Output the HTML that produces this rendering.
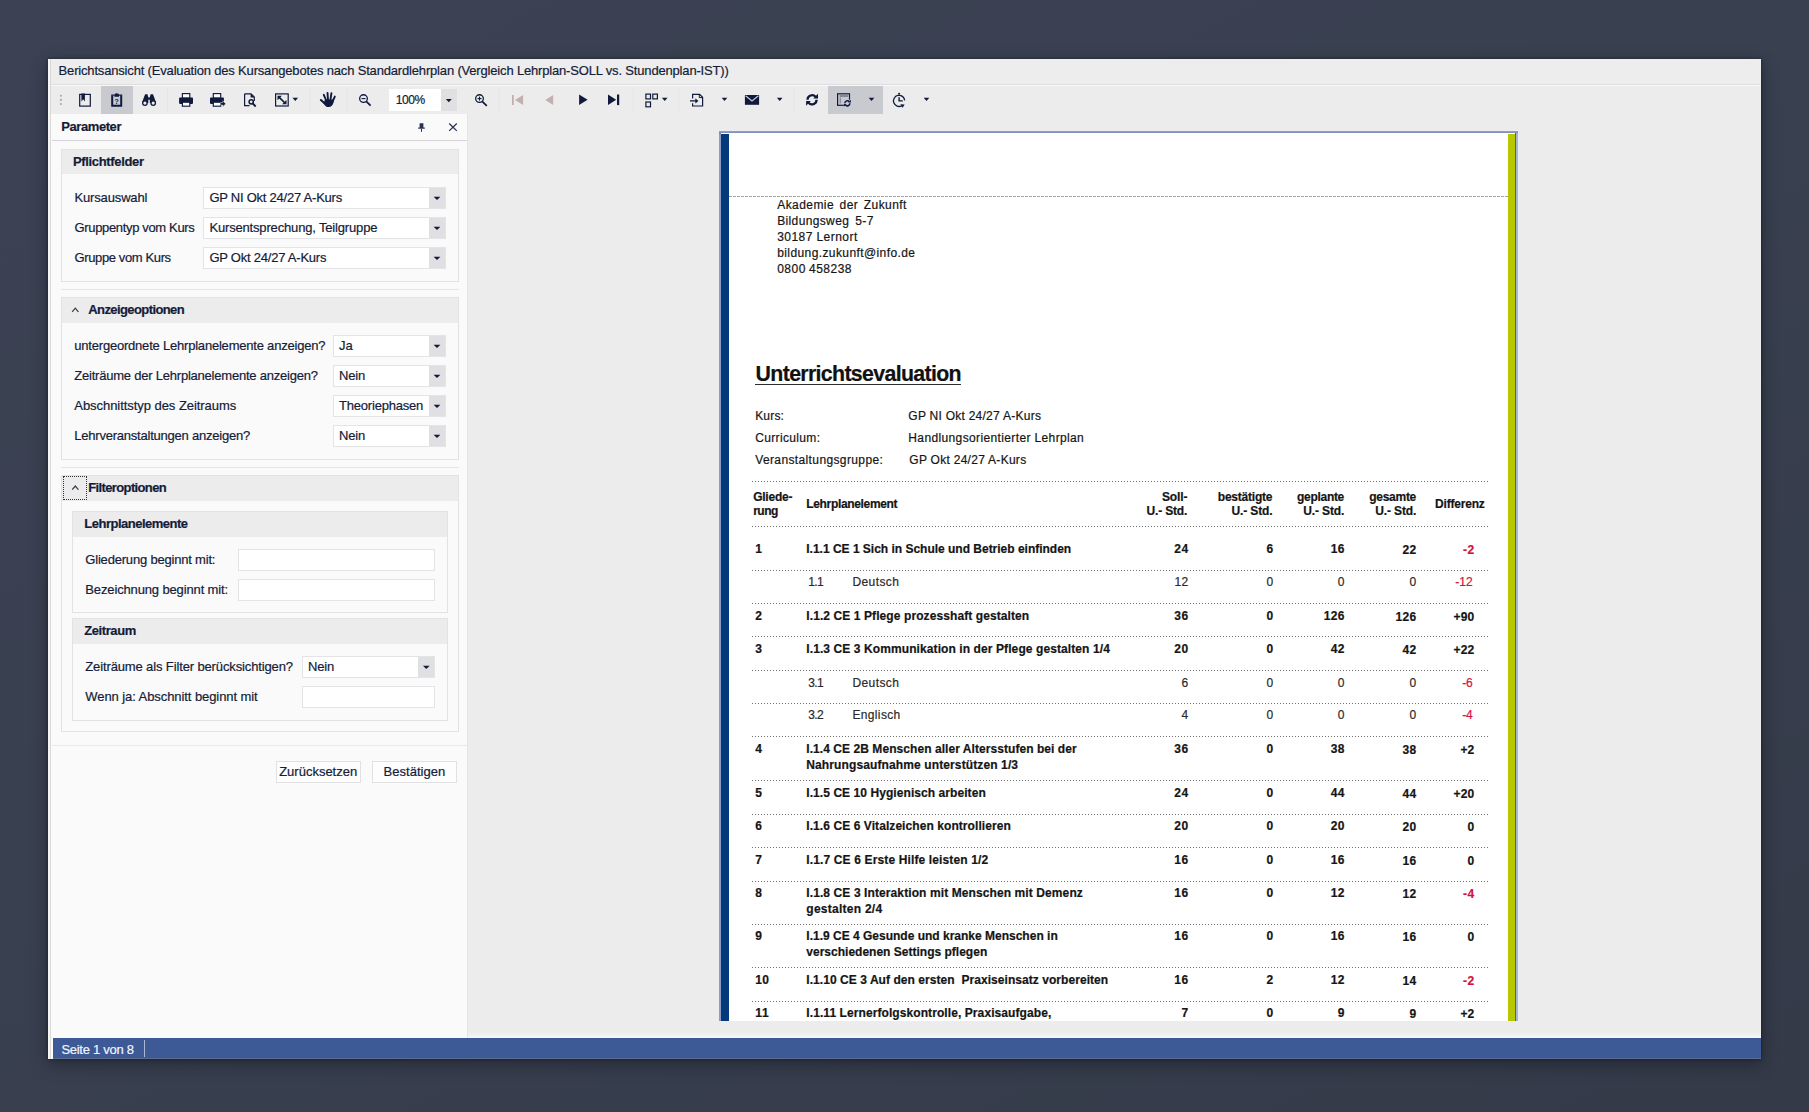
<!DOCTYPE html>
<html lang="de">
<head>
<meta charset="utf-8">
<title>Berichtsansicht</title>
<style>
html,body{margin:0;padding:0}
body{width:1809px;height:1112px;overflow:hidden;position:relative;
 background:linear-gradient(155deg,#3c4253 0%,#394050 45%,#343a48 100%);
 font-family:"Liberation Sans",sans-serif;color:#141c38}
.a{position:absolute;box-sizing:border-box}
.t{position:absolute;white-space:pre;line-height:20px;height:20px;-webkit-text-stroke:0.2px}
.win{left:48px;top:59px;width:1713px;height:1000px;background:#ececec;box-shadow:0 5px 16px 0 rgba(12,14,24,.42),0 0 3px 0 rgba(12,14,24,.55)}
.grp{border:1px solid #e2e2e4;background:#fafafa}
.gh{background:#ececec}
.cb{background:#fff;border:1px solid #e4e4e6}
.cbb{background:#e0e0e2}
.arr{width:0;height:0;border-left:3.5px solid transparent;border-right:3.5px solid transparent;border-top:4px solid #1a2340}
.arrs{width:0;height:0;border-left:3px solid transparent;border-right:3px solid transparent;border-top:3px solid #1a2340}
.sep{width:1px;background:#e3e3e3}
.dot{height:1px;left:752px;width:736px;background:repeating-linear-gradient(to right,#707070 0 1px,transparent 1px 3px)}
.btn{background:#fdfdfd;border:1px solid #e1e1e3}
svg{position:absolute;overflow:visible}
</style>
</head>
<body>
<div class="a win"></div>
<div class="a" style="left:48px;top:59px;width:2.3px;height:1000px;background:#f5f5f5"></div>
<div class="a" style="left:50.3px;top:59px;width:1px;height:1000px;background:#d9d9d7"></div>
<!-- title bar -->
<div class="a" style="left:51.3px;top:59px;width:1709.7px;height:25px;background:#ededed"></div>
<div class="a" style="left:51.3px;top:84px;width:1709.7px;height:1px;background:#dfdfdf"></div>
<div class="a" style="left:51.3px;top:85px;width:1709.7px;height:1px;background:#f8f8f8"></div>
<!-- toolbar -->
<div class="a" style="left:51.3px;top:86px;width:1709.7px;height:28px;background:#ececec"></div>
<div class="a" style="left:101px;top:86px;width:32px;height:28px;background:#c9cad0"></div>
<div class="a" style="left:828px;top:86px;width:55px;height:28px;background:#c9cad0"></div>

<!-- left panel -->
<div class="a" style="left:51.3px;top:114px;width:415.7px;height:945px;background:#fafafa"></div>
<div class="a" style="left:467px;top:114px;width:1px;height:924px;background:#e5e5e5"></div>
<div class="a" style="left:52px;top:140px;width:415px;height:1px;background:#d4d4d8"></div>
<div class="a grp" style="left:61px;top:149px;width:398.00px;height:133.00px;"></div>
<div class="a gh" style="left:62px;top:150px;width:396.00px;height:24.00px;"></div>
<div class="a " style="left:61px;top:289px;width:398.00px;height:1.00px;background:#e6e6e8"></div>
<div class="a grp" style="left:61px;top:297px;width:398.00px;height:163.00px;"></div>
<div class="a gh" style="left:62px;top:298px;width:396.00px;height:25.00px;"></div>
<div class="a " style="left:61px;top:467px;width:398.00px;height:1.00px;background:#e6e6e8"></div>
<div class="a grp" style="left:61px;top:475px;width:398.00px;height:257.00px;"></div>
<div class="a gh" style="left:62px;top:476px;width:396.00px;height:25.00px;"></div>
<div class="a grp" style="left:72px;top:511px;width:376.00px;height:102.00px;"></div>
<div class="a gh" style="left:73px;top:512px;width:374.00px;height:25.00px;"></div>
<div class="a grp" style="left:72px;top:618px;width:376.00px;height:103.00px;"></div>
<div class="a gh" style="left:73px;top:619px;width:374.00px;height:25.00px;"></div>
<div class="a " style="left:52px;top:745px;width:415.00px;height:1.00px;background:#e9e9eb"></div>
<div class="a " style="left:63px;top:476px;width:24.00px;height:24.00px;border:1px dotted #333"></div>
<div class="a cb" style="left:203px;top:187px;width:243.00px;height:22.00px;"></div><div class="a cbb" style="left:429px;top:188px;width:16.00px;height:20.00px;"></div>
<div class="a cb" style="left:203px;top:217px;width:243.00px;height:22.00px;"></div><div class="a cbb" style="left:429px;top:218px;width:16.00px;height:20.00px;"></div>
<div class="a cb" style="left:203px;top:247px;width:243.00px;height:22.00px;"></div><div class="a cbb" style="left:429px;top:248px;width:16.00px;height:20.00px;"></div>
<div class="a cb" style="left:333px;top:335px;width:113.00px;height:22.00px;"></div><div class="a cbb" style="left:429px;top:336px;width:16.00px;height:20.00px;"></div>
<div class="a cb" style="left:333px;top:365px;width:113.00px;height:22.00px;"></div><div class="a cbb" style="left:429px;top:366px;width:16.00px;height:20.00px;"></div>
<div class="a cb" style="left:333px;top:395px;width:113.00px;height:22.00px;"></div><div class="a cbb" style="left:429px;top:396px;width:16.00px;height:20.00px;"></div>
<div class="a cb" style="left:333px;top:425px;width:113.00px;height:22.00px;"></div><div class="a cbb" style="left:429px;top:426px;width:16.00px;height:20.00px;"></div>
<div class="a cb" style="left:238px;top:549px;width:197.00px;height:22.00px;"></div>
<div class="a cb" style="left:238px;top:579px;width:197.00px;height:22.00px;"></div>
<div class="a cb" style="left:302px;top:656px;width:133.00px;height:22.00px;"></div><div class="a cbb" style="left:418px;top:657px;width:16.00px;height:20.00px;"></div>
<div class="a cb" style="left:302px;top:686px;width:133.00px;height:22.00px;"></div>
<div class="a btn" style="left:276px;top:761px;width:85.00px;height:22.00px;"></div>
<div class="a btn" style="left:372px;top:761px;width:85.00px;height:22.00px;"></div>
<div class="a " style="left:389px;top:89px;width:52.00px;height:22.00px;background:#fff"></div>
<div class="a " style="left:441px;top:89px;width:16.00px;height:22.00px;background:#e0e0e2"></div>
<div class="a" style="left:468px;top:1032px;width:1293px;height:6px;background:linear-gradient(to bottom,#ececec,#f7f7f7)"></div>
<!-- status bar -->
<div class="a" style="left:53px;top:1038px;width:1708px;height:21px;background:#3d5996"></div>
<div class="a" style="left:53px;top:1058px;width:1708px;height:1px;background:#596d92"></div>
<div class="a" style="left:144px;top:1040px;width:1px;height:17px;background:#aab6d4"></div>
<!-- report page -->
<div class="a" style="left:719px;top:130.5px;width:798.8px;height:890.5px;background:linear-gradient(to bottom,#96a2d0 0,#7683b4 2.5px,#8e9ac6 3px)"></div>
<div class="a" style="left:1515.2px;top:133px;width:1px;height:888px;background:#55598f"></div>
<div class="a" style="left:1516.2px;top:133px;width:1.6px;height:888px;background:#a5b6d2"></div>
<div class="a" style="left:721px;top:133px;width:794.2px;height:888px;background:#fff"></div>
<div class="a" style="left:721px;top:134px;width:8px;height:887px;background:#043a7a"></div>
<div class="a" style="left:1507.8px;top:134px;width:7.4px;height:887px;background:#b8c800"></div>
<div class="a" style="left:729px;top:196px;width:779px;height:1px;background:repeating-linear-gradient(to right,#a2a2a2 0 3px,transparent 3px 4px)"></div>
<div class="a" style="left:755px;top:383.7px;width:206px;height:1.5px;background:#2e2e2e"></div>
<div class="a dot" style="top:481px"></div>
<div class="a dot" style="top:526px"></div>
<div class="a dot" style="top:570px"></div>
<div class="a dot" style="top:603px"></div>
<div class="a dot" style="top:636px"></div>
<div class="a dot" style="top:670px"></div>
<div class="a dot" style="top:703px"></div>
<div class="a dot" style="top:736px"></div>
<div class="a dot" style="top:780px"></div>
<div class="a dot" style="top:814px"></div>
<div class="a dot" style="top:847px"></div>
<div class="a dot" style="top:881px"></div>
<div class="a dot" style="top:924px"></div>
<div class="a dot" style="top:967px"></div>
<div class="a dot" style="top:1001px"></div>
<span class="t" style="left:58.60px;top:61px;font-size:13px;letter-spacing:-0.172px;">Berichtsansicht (Evaluation des Kursangebotes nach Standardlehrplan (Vergleich Lehrplan-SOLL vs. Stundenplan-IST))</span>
<span class="t" style="left:395.80px;top:90px;font-size:12px;letter-spacing:-0.418px;">100%</span>
<span class="t" style="left:61.20px;top:117px;font-size:13px;font-weight:700;letter-spacing:-0.412px;">Parameter</span>
<span class="t" style="left:73.00px;top:152px;font-size:13px;font-weight:700;letter-spacing:-0.339px;">Pflichtfelder</span>
<span class="t" style="left:74.50px;top:188px;font-size:13px;letter-spacing:-0.152px;">Kursauswahl</span>
<span class="t" style="left:74.50px;top:218px;font-size:13px;letter-spacing:-0.340px;">Gruppentyp vom Kurs</span>
<span class="t" style="left:74.50px;top:248px;font-size:13px;letter-spacing:-0.378px;">Gruppe vom Kurs</span>
<span class="t" style="left:209.40px;top:188px;font-size:13px;letter-spacing:-0.238px;">GP NI Okt 24/27 A-Kurs</span>
<span class="t" style="left:209.40px;top:218px;font-size:13px;letter-spacing:-0.165px;">Kursentsprechung, Teilgruppe</span>
<span class="t" style="left:209.40px;top:248px;font-size:13px;letter-spacing:-0.226px;">GP Okt 24/27 A-Kurs</span>
<span class="t" style="left:88.30px;top:300px;font-size:13px;font-weight:700;letter-spacing:-0.595px;">Anzeigeoptionen</span>
<span class="t" style="left:74.30px;top:336px;font-size:13px;letter-spacing:-0.208px;">untergeordnete Lehrplanelemente anzeigen?</span>
<span class="t" style="left:74.30px;top:366px;font-size:13px;letter-spacing:-0.220px;">Zeiträume der Lehrplanelemente anzeigen?</span>
<span class="t" style="left:74.30px;top:396px;font-size:13px;letter-spacing:-0.051px;">Abschnittstyp des Zeitraums</span>
<span class="t" style="left:74.30px;top:426px;font-size:13px;letter-spacing:-0.222px;">Lehrveranstaltungen anzeigen?</span>
<span class="t" style="left:339.00px;top:336px;font-size:13px;letter-spacing:0.101px;">Ja</span>
<span class="t" style="left:339.00px;top:366px;font-size:13px;letter-spacing:-0.204px;">Nein</span>
<span class="t" style="left:339.00px;top:396px;font-size:13px;letter-spacing:-0.202px;">Theoriephasen</span>
<span class="t" style="left:339.00px;top:426px;font-size:13px;letter-spacing:-0.204px;">Nein</span>
<span class="t" style="left:88.30px;top:478px;font-size:13px;font-weight:700;letter-spacing:-0.634px;">Filteroptionen</span>
<span class="t" style="left:84.30px;top:514px;font-size:13px;font-weight:700;letter-spacing:-0.502px;">Lehrplanelemente</span>
<span class="t" style="left:85.30px;top:550px;font-size:13px;letter-spacing:-0.192px;">Gliederung beginnt mit:</span>
<span class="t" style="left:85.30px;top:580px;font-size:13px;letter-spacing:-0.138px;">Bezeichnung beginnt mit:</span>
<span class="t" style="left:84.30px;top:621px;font-size:13px;font-weight:700;letter-spacing:-0.424px;">Zeitraum</span>
<span class="t" style="left:85.30px;top:657px;font-size:13px;letter-spacing:-0.131px;">Zeiträume als Filter berücksichtigen?</span>
<span class="t" style="left:85.30px;top:687px;font-size:13px;letter-spacing:-0.077px;">Wenn ja: Abschnitt beginnt mit</span>
<span class="t" style="left:308.00px;top:657px;font-size:13px;letter-spacing:-0.204px;">Nein</span>
<span class="t" style="left:279.16px;top:762px;font-size:13px;">Zurücksetzen</span>
<span class="t" style="left:383.49px;top:762px;font-size:13px;letter-spacing:0.039px;">Bestätigen</span>
<span class="t" style="left:61.40px;top:1040px;font-size:13px;color:#f2f4fa;letter-spacing:-0.269px;">Seite 1 von 8</span>
<span class="t" style="left:777.20px;top:195px;font-size:12px;color:#151515;letter-spacing:0.438px;word-spacing:1.770px;">Akademie der Zukunft</span>
<span class="t" style="left:777.20px;top:211px;font-size:12px;color:#151515;letter-spacing:0.363px;word-spacing:2.324px;">Bildungsweg 5-7</span>
<span class="t" style="left:777.20px;top:227px;font-size:12px;color:#151515;letter-spacing:0.456px;word-spacing:-0.162px;">30187 Lernort</span>
<span class="t" style="left:777.20px;top:243px;font-size:12px;color:#151515;letter-spacing:0.402px;">bildung.zukunft@info.de</span>
<span class="t" style="left:777.20px;top:259px;font-size:12px;color:#151515;letter-spacing:0.489px;word-spacing:-0.652px;">0800 458238</span>
<span class="t" style="left:755.60px;top:364px;font-size:21.33px;font-weight:700;color:#111;letter-spacing:-0.665px;">Unterrichtsevaluation</span>
<span class="t" style="left:755.20px;top:406px;font-size:12px;color:#151515;letter-spacing:0.172px;">Kurs:</span>
<span class="t" style="left:908.30px;top:406px;font-size:12px;color:#151515;letter-spacing:0.258px;">GP NI Okt 24/27 A-Kurs</span>
<span class="t" style="left:755.20px;top:428px;font-size:12px;color:#151515;letter-spacing:0.346px;">Curriculum:</span>
<span class="t" style="left:908.30px;top:428px;font-size:12px;color:#151515;letter-spacing:0.370px;">Handlungsorientierter Lehrplan</span>
<span class="t" style="left:755.20px;top:450px;font-size:12px;color:#151515;letter-spacing:0.378px;">Veranstaltungsgruppe:</span>
<span class="t" style="left:909.30px;top:450px;font-size:12px;color:#151515;letter-spacing:0.278px;">GP Okt 24/27 A-Kurs</span>
<span class="t" style="left:753.20px;top:487px;font-size:12px;font-weight:700;color:#151515;letter-spacing:-0.243px;">Gliede-</span>
<span class="t" style="left:753.20px;top:501px;font-size:12px;font-weight:700;color:#151515;letter-spacing:-0.492px;">rung</span>
<span class="t" style="left:806.30px;top:494px;font-size:12px;font-weight:700;color:#151515;letter-spacing:-0.338px;">Lehrplanelement</span>
<span class="t" style="left:1162.00px;top:487px;font-size:12px;font-weight:700;color:#151515;letter-spacing:-0.150px;">Soll-</span>
<span class="t" style="left:1146.45px;top:501px;font-size:12px;font-weight:700;color:#151515;letter-spacing:-0.150px;">U.- Std.</span>
<span class="t" style="left:1217.77px;top:487px;font-size:12px;font-weight:700;color:#151515;letter-spacing:-0.217px;">bestätigte</span>
<span class="t" style="left:1231.55px;top:501px;font-size:12px;font-weight:700;color:#151515;letter-spacing:-0.150px;">U.- Std.</span>
<span class="t" style="left:1297.05px;top:487px;font-size:12px;font-weight:700;color:#151515;letter-spacing:-0.299px;">geplante</span>
<span class="t" style="left:1303.35px;top:501px;font-size:12px;font-weight:700;color:#151515;letter-spacing:-0.150px;">U.- Std.</span>
<span class="t" style="left:1369.18px;top:487px;font-size:12px;font-weight:700;color:#151515;letter-spacing:-0.263px;">gesamte</span>
<span class="t" style="left:1375.35px;top:501px;font-size:12px;font-weight:700;color:#151515;letter-spacing:-0.150px;">U.- Std.</span>
<span class="t" style="left:1435.10px;top:494px;font-size:12px;font-weight:700;color:#151515;letter-spacing:-0.205px;">Differenz</span>
<span class="t" style="left:755.20px;top:539px;font-size:12px;font-weight:700;color:#151515;letter-spacing:0.410px;">1</span>
<span class="t" style="left:806.30px;top:539px;font-size:12px;font-weight:700;color:#151515;letter-spacing:-0.012px;">I.1.1 CE 1 Sich in Schule und Betrieb einfinden</span>
<span class="t" style="left:1174.32px;top:539px;font-size:12px;font-weight:700;color:#151515;letter-spacing:0.418px;">24</span>
<span class="t" style="left:1266.61px;top:539px;font-size:12px;font-weight:700;color:#151515;letter-spacing:0.410px;">6</span>
<span class="t" style="left:1330.72px;top:539px;font-size:12px;font-weight:700;color:#151515;letter-spacing:0.418px;">16</span>
<span class="t" style="left:1402.52px;top:540px;font-size:12px;font-weight:700;color:#151515;letter-spacing:0.418px;">22</span>
<span class="t" style="left:1462.88px;top:540px;font-size:12px;font-weight:700;color:#d4103c;letter-spacing:0.651px;">-2</span>
<span class="t" style="left:808.20px;top:572px;font-size:12px;color:#2a2a2a;letter-spacing:-0.566px;">1.1</span>
<span class="t" style="left:852.40px;top:572px;font-size:12px;color:#2a2a2a;letter-spacing:0.416px;">Deutsch</span>
<span class="t" style="left:1174.47px;top:572px;font-size:12px;color:#2a2a2a;letter-spacing:0.273px;">12</span>
<span class="t" style="left:1266.61px;top:572px;font-size:12px;color:#2a2a2a;letter-spacing:0.265px;">0</span>
<span class="t" style="left:1337.81px;top:572px;font-size:12px;color:#2a2a2a;letter-spacing:0.265px;">0</span>
<span class="t" style="left:1409.61px;top:572px;font-size:12px;color:#2a2a2a;letter-spacing:0.265px;">0</span>
<span class="t" style="left:1455.37px;top:572px;font-size:12px;color:#d4103c;letter-spacing:-0.009px;">-12</span>
<span class="t" style="left:755.20px;top:606px;font-size:12px;font-weight:700;color:#151515;letter-spacing:0.410px;">2</span>
<span class="t" style="left:806.30px;top:606px;font-size:12px;font-weight:700;color:#151515;letter-spacing:0.091px;">I.1.2 CE 1 Pflege prozesshaft gestalten</span>
<span class="t" style="left:1174.32px;top:606px;font-size:12px;font-weight:700;color:#151515;letter-spacing:0.418px;">36</span>
<span class="t" style="left:1266.61px;top:606px;font-size:12px;font-weight:700;color:#151515;letter-spacing:0.410px;">0</span>
<span class="t" style="left:1323.64px;top:606px;font-size:12px;font-weight:700;color:#151515;letter-spacing:0.415px;">126</span>
<span class="t" style="left:1395.44px;top:607px;font-size:12px;font-weight:700;color:#151515;letter-spacing:0.415px;">126</span>
<span class="t" style="left:1453.47px;top:607px;font-size:12px;font-weight:700;color:#151515;letter-spacing:0.188px;">+90</span>
<span class="t" style="left:755.20px;top:639px;font-size:12px;font-weight:700;color:#151515;letter-spacing:0.410px;">3</span>
<span class="t" style="left:806.30px;top:639px;font-size:12px;font-weight:700;color:#151515;letter-spacing:0.094px;">I.1.3 CE 3 Kommunikation in der Pflege gestalten 1/4</span>
<span class="t" style="left:1174.32px;top:639px;font-size:12px;font-weight:700;color:#151515;letter-spacing:0.418px;">20</span>
<span class="t" style="left:1266.61px;top:639px;font-size:12px;font-weight:700;color:#151515;letter-spacing:0.410px;">0</span>
<span class="t" style="left:1330.72px;top:639px;font-size:12px;font-weight:700;color:#151515;letter-spacing:0.418px;">42</span>
<span class="t" style="left:1402.52px;top:640px;font-size:12px;font-weight:700;color:#151515;letter-spacing:0.418px;">42</span>
<span class="t" style="left:1453.47px;top:640px;font-size:12px;font-weight:700;color:#151515;letter-spacing:0.188px;">+22</span>
<span class="t" style="left:808.20px;top:673px;font-size:12px;color:#2a2a2a;letter-spacing:-0.566px;">3.1</span>
<span class="t" style="left:852.40px;top:673px;font-size:12px;color:#2a2a2a;letter-spacing:0.416px;">Deutsch</span>
<span class="t" style="left:1181.41px;top:673px;font-size:12px;color:#2a2a2a;letter-spacing:0.265px;">6</span>
<span class="t" style="left:1266.61px;top:673px;font-size:12px;color:#2a2a2a;letter-spacing:0.265px;">0</span>
<span class="t" style="left:1337.81px;top:673px;font-size:12px;color:#2a2a2a;letter-spacing:0.265px;">0</span>
<span class="t" style="left:1409.61px;top:673px;font-size:12px;color:#2a2a2a;letter-spacing:0.265px;">0</span>
<span class="t" style="left:1462.18px;top:673px;font-size:12px;color:#d4103c;letter-spacing:-0.154px;">-6</span>
<span class="t" style="left:808.20px;top:705px;font-size:12px;color:#2a2a2a;letter-spacing:-0.566px;">3.2</span>
<span class="t" style="left:852.40px;top:705px;font-size:12px;color:#2a2a2a;letter-spacing:0.363px;">Englisch</span>
<span class="t" style="left:1181.41px;top:705px;font-size:12px;color:#2a2a2a;letter-spacing:0.265px;">4</span>
<span class="t" style="left:1266.61px;top:705px;font-size:12px;color:#2a2a2a;letter-spacing:0.265px;">0</span>
<span class="t" style="left:1337.81px;top:705px;font-size:12px;color:#2a2a2a;letter-spacing:0.265px;">0</span>
<span class="t" style="left:1409.61px;top:705px;font-size:12px;color:#2a2a2a;letter-spacing:0.265px;">0</span>
<span class="t" style="left:1462.18px;top:705px;font-size:12px;color:#d4103c;letter-spacing:-0.154px;">-4</span>
<span class="t" style="left:755.20px;top:739px;font-size:12px;font-weight:700;color:#151515;letter-spacing:0.410px;">4</span>
<span class="t" style="left:806.30px;top:739px;font-size:12px;font-weight:700;color:#151515;letter-spacing:0.059px;">I.1.4 CE 2B Menschen aller Altersstufen bei der</span>
<span class="t" style="left:806.30px;top:755px;font-size:12px;font-weight:700;color:#151515;letter-spacing:0.115px;">Nahrungsaufnahme unterstützen 1/3</span>
<span class="t" style="left:1174.32px;top:739px;font-size:12px;font-weight:700;color:#151515;letter-spacing:0.418px;">36</span>
<span class="t" style="left:1266.61px;top:739px;font-size:12px;font-weight:700;color:#151515;letter-spacing:0.410px;">0</span>
<span class="t" style="left:1330.72px;top:739px;font-size:12px;font-weight:700;color:#151515;letter-spacing:0.418px;">38</span>
<span class="t" style="left:1402.52px;top:740px;font-size:12px;font-weight:700;color:#151515;letter-spacing:0.418px;">38</span>
<span class="t" style="left:1460.44px;top:740px;font-size:12px;font-weight:700;color:#151515;letter-spacing:0.077px;">+2</span>
<span class="t" style="left:755.20px;top:783px;font-size:12px;font-weight:700;color:#151515;letter-spacing:0.410px;">5</span>
<span class="t" style="left:806.30px;top:783px;font-size:12px;font-weight:700;color:#151515;letter-spacing:0.068px;">I.1.5 CE 10 Hygienisch arbeiten</span>
<span class="t" style="left:1174.32px;top:783px;font-size:12px;font-weight:700;color:#151515;letter-spacing:0.418px;">24</span>
<span class="t" style="left:1266.61px;top:783px;font-size:12px;font-weight:700;color:#151515;letter-spacing:0.410px;">0</span>
<span class="t" style="left:1330.72px;top:783px;font-size:12px;font-weight:700;color:#151515;letter-spacing:0.418px;">44</span>
<span class="t" style="left:1402.52px;top:784px;font-size:12px;font-weight:700;color:#151515;letter-spacing:0.418px;">44</span>
<span class="t" style="left:1453.47px;top:784px;font-size:12px;font-weight:700;color:#151515;letter-spacing:0.188px;">+20</span>
<span class="t" style="left:755.20px;top:816px;font-size:12px;font-weight:700;color:#151515;letter-spacing:0.410px;">6</span>
<span class="t" style="left:806.30px;top:816px;font-size:12px;font-weight:700;color:#151515;letter-spacing:0.074px;">I.1.6 CE 6 Vitalzeichen kontrollieren</span>
<span class="t" style="left:1174.32px;top:816px;font-size:12px;font-weight:700;color:#151515;letter-spacing:0.418px;">20</span>
<span class="t" style="left:1266.61px;top:816px;font-size:12px;font-weight:700;color:#151515;letter-spacing:0.410px;">0</span>
<span class="t" style="left:1330.72px;top:816px;font-size:12px;font-weight:700;color:#151515;letter-spacing:0.418px;">20</span>
<span class="t" style="left:1402.52px;top:817px;font-size:12px;font-weight:700;color:#151515;letter-spacing:0.418px;">20</span>
<span class="t" style="left:1467.51px;top:817px;font-size:12px;font-weight:700;color:#151515;letter-spacing:0.410px;">0</span>
<span class="t" style="left:755.20px;top:850px;font-size:12px;font-weight:700;color:#151515;letter-spacing:0.410px;">7</span>
<span class="t" style="left:806.30px;top:850px;font-size:12px;font-weight:700;color:#151515;letter-spacing:0.136px;">I.1.7 CE 6 Erste Hilfe leisten 1/2</span>
<span class="t" style="left:1174.32px;top:850px;font-size:12px;font-weight:700;color:#151515;letter-spacing:0.418px;">16</span>
<span class="t" style="left:1266.61px;top:850px;font-size:12px;font-weight:700;color:#151515;letter-spacing:0.410px;">0</span>
<span class="t" style="left:1330.72px;top:850px;font-size:12px;font-weight:700;color:#151515;letter-spacing:0.418px;">16</span>
<span class="t" style="left:1402.52px;top:851px;font-size:12px;font-weight:700;color:#151515;letter-spacing:0.418px;">16</span>
<span class="t" style="left:1467.51px;top:851px;font-size:12px;font-weight:700;color:#151515;letter-spacing:0.410px;">0</span>
<span class="t" style="left:755.20px;top:883px;font-size:12px;font-weight:700;color:#151515;letter-spacing:0.410px;">8</span>
<span class="t" style="left:806.30px;top:883px;font-size:12px;font-weight:700;color:#151515;letter-spacing:0.099px;">I.1.8 CE 3 Interaktion mit Menschen mit Demenz</span>
<span class="t" style="left:806.30px;top:899px;font-size:12px;font-weight:700;color:#151515;letter-spacing:0.260px;">gestalten 2/4</span>
<span class="t" style="left:1174.32px;top:883px;font-size:12px;font-weight:700;color:#151515;letter-spacing:0.418px;">16</span>
<span class="t" style="left:1266.61px;top:883px;font-size:12px;font-weight:700;color:#151515;letter-spacing:0.410px;">0</span>
<span class="t" style="left:1330.72px;top:883px;font-size:12px;font-weight:700;color:#151515;letter-spacing:0.418px;">12</span>
<span class="t" style="left:1402.52px;top:884px;font-size:12px;font-weight:700;color:#151515;letter-spacing:0.418px;">12</span>
<span class="t" style="left:1462.88px;top:884px;font-size:12px;font-weight:700;color:#d4103c;letter-spacing:0.651px;">-4</span>
<span class="t" style="left:755.20px;top:926px;font-size:12px;font-weight:700;color:#151515;letter-spacing:0.410px;">9</span>
<span class="t" style="left:806.30px;top:926px;font-size:12px;font-weight:700;color:#151515;">I.1.9 CE 4 Gesunde und kranke Menschen in</span>
<span class="t" style="left:806.30px;top:942px;font-size:12px;font-weight:700;color:#151515;letter-spacing:0.007px;">verschiedenen Settings pflegen</span>
<span class="t" style="left:1174.32px;top:926px;font-size:12px;font-weight:700;color:#151515;letter-spacing:0.418px;">16</span>
<span class="t" style="left:1266.61px;top:926px;font-size:12px;font-weight:700;color:#151515;letter-spacing:0.410px;">0</span>
<span class="t" style="left:1330.72px;top:926px;font-size:12px;font-weight:700;color:#151515;letter-spacing:0.418px;">16</span>
<span class="t" style="left:1402.52px;top:927px;font-size:12px;font-weight:700;color:#151515;letter-spacing:0.418px;">16</span>
<span class="t" style="left:1467.51px;top:927px;font-size:12px;font-weight:700;color:#151515;letter-spacing:0.410px;">0</span>
<span class="t" style="left:755.20px;top:970px;font-size:12px;font-weight:700;color:#151515;letter-spacing:0.418px;">10</span>
<span class="t" style="left:806.30px;top:970px;font-size:12px;font-weight:700;color:#151515;letter-spacing:0.055px;">I.1.10 CE 3 Auf den ersten  Praxiseinsatz vorbereiten</span>
<span class="t" style="left:1174.32px;top:970px;font-size:12px;font-weight:700;color:#151515;letter-spacing:0.418px;">16</span>
<span class="t" style="left:1266.61px;top:970px;font-size:12px;font-weight:700;color:#151515;letter-spacing:0.410px;">2</span>
<span class="t" style="left:1330.72px;top:970px;font-size:12px;font-weight:700;color:#151515;letter-spacing:0.418px;">12</span>
<span class="t" style="left:1402.52px;top:971px;font-size:12px;font-weight:700;color:#151515;letter-spacing:0.418px;">14</span>
<span class="t" style="left:1462.88px;top:971px;font-size:12px;font-weight:700;color:#d4103c;letter-spacing:0.651px;">-2</span>
<span class="t" style="left:755.20px;top:1003px;font-size:12px;font-weight:700;color:#151515;letter-spacing:0.754px;">11</span>
<span class="t" style="left:806.30px;top:1003px;font-size:12px;font-weight:700;color:#151515;letter-spacing:0.084px;">I.1.11 Lernerfolgskontrolle, Praxisaufgabe,</span>
<span class="t" style="left:1181.41px;top:1003px;font-size:12px;font-weight:700;color:#151515;letter-spacing:0.410px;">7</span>
<span class="t" style="left:1266.61px;top:1003px;font-size:12px;font-weight:700;color:#151515;letter-spacing:0.410px;">0</span>
<span class="t" style="left:1337.81px;top:1003px;font-size:12px;font-weight:700;color:#151515;letter-spacing:0.410px;">9</span>
<span class="t" style="left:1409.61px;top:1004px;font-size:12px;font-weight:700;color:#151515;letter-spacing:0.410px;">9</span>
<span class="t" style="left:1460.44px;top:1004px;font-size:12px;font-weight:700;color:#151515;letter-spacing:0.077px;">+2</span>
<svg class="a" style="left:0;top:0;z-index:5" width="1809" height="1112" viewBox="0 0 1809 1112">
<polygon points="433.60,196.70 440.40,196.70 437.00,200.00" fill="#0f1a3c" />
<polygon points="433.60,226.70 440.40,226.70 437.00,230.00" fill="#0f1a3c" />
<polygon points="433.60,256.70 440.40,256.70 437.00,260.00" fill="#0f1a3c" />
<polygon points="433.60,344.70 440.40,344.70 437.00,348.00" fill="#0f1a3c" />
<polygon points="433.60,374.70 440.40,374.70 437.00,378.00" fill="#0f1a3c" />
<polygon points="433.60,404.70 440.40,404.70 437.00,408.00" fill="#0f1a3c" />
<polygon points="433.60,434.70 440.40,434.70 437.00,438.00" fill="#0f1a3c" />
<polygon points="422.90,665.70 429.70,665.70 426.30,669.00" fill="#0f1a3c" />
<polygon points="445.80,99.00 451.80,99.00 448.80,102.20" fill="#0f1a3c" />
<polygon points="292.50,97.80 298.10,97.80 295.30,100.90" fill="#0f1a3c" />
<polygon points="661.90,97.80 667.50,97.80 664.70,100.90" fill="#0f1a3c" />
<polygon points="721.70,97.80 727.30,97.80 724.50,100.90" fill="#0f1a3c" />
<polygon points="776.90,97.80 782.50,97.80 779.70,100.90" fill="#0f1a3c" />
<polygon points="868.70,97.80 874.30,97.80 871.50,100.90" fill="#0f1a3c" />
<polygon points="923.70,97.80 929.30,97.80 926.50,100.90" fill="#0f1a3c" />
<rect x="167" y="88" width="1" height="24" fill="#e5e5e5"/>
<rect x="309.5" y="88" width="1" height="24" fill="#e5e5e5"/>
<rect x="346.4" y="88" width="1" height="24" fill="#e5e5e5"/>
<rect x="498.7" y="88" width="1" height="24" fill="#e5e5e5"/>
<rect x="632.5" y="88" width="1" height="24" fill="#e5e5e5"/>
<rect x="678.2" y="88" width="1" height="24" fill="#e5e5e5"/>
<rect x="793.5" y="88" width="1" height="24" fill="#e5e5e5"/>
<circle cx="60.9" cy="95.8" r="1.05" fill="#a9a9ae"/>
<circle cx="60.9" cy="99.9" r="1.05" fill="#a9a9ae"/>
<circle cx="60.9" cy="104" r="1.05" fill="#a9a9ae"/>
<rect x="79.7" y="94.4" width="10.6" height="11.7" fill="none" stroke="#0f1a3c" stroke-width="1.2"/>
<polygon points="81.4,93.4 84.9,93.4 84.9,101.6 83.15,99.3 81.4,101.6" fill="#0f1a3c" />
<path d="M112.2 95.6 V105.7 H121.2 V95.6" fill="none" stroke="#0f1a3c" stroke-width="2"/>
<path d="M111.2 95.2 H114.6 M118.8 95.2 H122.2" stroke="#0f1a3c" stroke-width="1.2"/>
<path d="M114.4 96.8 V95 Q114.4 93.3 116.7 93.3 Q119 93.3 119 95 V96.8 Z" fill="#0f1a3c"/>
<text x="116.7" y="103.6" font-size="7" font-weight="700" text-anchor="middle" fill="#0f1a3c" font-family="Liberation Sans, sans-serif">?</text>
<polygon points="145.2,94.3 147.5,94.3 148.3,97.3 148.3,103 142,103 142.7,100.8 144.4,96" fill="#0f1a3c" />
<polygon points="152.9,94.3 150.6,94.3 149.8,97.3 149.8,103 156.1,103 155.4,100.8 153.7,96" fill="#0f1a3c" />
<rect x="148" y="97.5" width="2.1" height="2.2" fill="#0f1a3c"/>
<circle cx="144.9" cy="103.1" r="2.25" fill="#ececec" stroke="#0f1a3c" stroke-width="1.3"/>
<circle cx="153.2" cy="103.1" r="2.25" fill="#ececec" stroke="#0f1a3c" stroke-width="1.3"/>
<rect x="182.4" y="93.6" width="7.4" height="4.6" fill="#fff" stroke="#0f1a3c" stroke-width="1.15"/>
<rect x="179.1" y="97.5" width="13.9" height="6.4" rx="0.8" fill="#0f1a3c"/>
<rect x="182.4" y="102.2" width="7.4" height="4" fill="#fff" stroke="#0f1a3c" stroke-width="1.15"/>
<rect x="213.3" y="93.6" width="7.4" height="4.6" fill="#fff" stroke="#0f1a3c" stroke-width="1.15"/>
<rect x="210.0" y="97.5" width="13.9" height="6.4" rx="0.8" fill="#0f1a3c"/>
<rect x="213.3" y="102.2" width="7.4" height="4" fill="#fff" stroke="#0f1a3c" stroke-width="1.15"/>
<path d="M220.6 102.5 h2.2 v-1.6 l3 2.9 l-3 2.9 v-1.6 h-2.2 z" fill="#0f1a3c" stroke="#ececec" stroke-width="0.5"/>
<path d="M244.6 93.8 H251 L254.3 97.1 V101 M244.6 93.8 V105.6 H249.5" fill="none" stroke="#0f1a3c" stroke-width="1.2"/>
<polygon points="250.6,93.6 254.5,97.5 250.6,97.5" fill="#0f1a3c" />
<circle cx="251.2" cy="101.8" r="2.1" fill="none" stroke="#0f1a3c" stroke-width="1.5"/>
<path d="M252.8 103.5 L255.7 106.5" stroke="#0f1a3c" stroke-width="1.8"/>
<rect x="275.6" y="93.9" width="12.6" height="12.1" fill="none" stroke="#0f1a3c" stroke-width="1.2"/>
<path d="M279 97.2 L285 103" stroke="#0f1a3c" stroke-width="1.7"/>
<polygon points="277.5,95.8 281.9,95.8 277.5,100.2" fill="#0f1a3c" />
<polygon points="286.5,104.3 282.1,104.3 286.5,99.9" fill="#0f1a3c" />
<g stroke="#0f1a3c" stroke-linecap="round" fill="none"><path d="M320.9 100 L324.6 103.3" stroke-width="2.1"/><path d="M323.8 94.8 L326.2 100.5" stroke-width="1.9"/><path d="M327.5 92.9 L328 100" stroke-width="1.9"/><path d="M331.4 93.3 L330.4 100" stroke-width="1.9"/><path d="M334.8 96.6 L332.6 101.5" stroke-width="1.9"/></g>
<path d="M325 99.6 L333.4 99.4 Q334 101 333.4 103 Q332 107.1 328.6 107.1 Q325.4 107.1 323.6 103.2 Z" fill="#0f1a3c"/>
<circle cx="363.5" cy="98.6" r="3.85" fill="none" stroke="#0f1a3c" stroke-width="1.3"/>
<path d="M366.2 101.39999999999999 L370.6 105.7" stroke="#0f1a3c" stroke-width="1.7"/>
<path d="M361.5 98.6 H365.5" stroke="#0f1a3c" stroke-width="1.1"/>
<circle cx="479.5" cy="98.6" r="3.85" fill="none" stroke="#0f1a3c" stroke-width="1.3"/>
<path d="M482.2 101.39999999999999 L486.8 105.9" stroke="#0f1a3c" stroke-width="1.7"/>
<path d="M477.5 98.6 H481.5" stroke="#0f1a3c" stroke-width="1.1"/>
<path d="M479.5 96.6 V100.6" stroke="#0f1a3c" stroke-width="1.1"/>
<rect x="512" y="95" width="1.8" height="10" fill="#c3aeb0"/>
<polygon points="523.1,95 523.1,105 515,100" fill="#c3aeb0" />
<polygon points="553.2,95 553.2,105 545.3,100" fill="#c3aeb0" />
<polygon points="579.1,94.5 579.1,105.1 587.6,99.8" fill="#0f1a3c" />
<polygon points="608,94.5 608,105.1 616.2,99.8" fill="#0f1a3c" />
<rect x="617" y="94.5" width="2.2" height="10.6" fill="#0f1a3c"/>
<rect x="645.9" y="94.1" width="4.6" height="4.8" fill="none" stroke="#0f1a3c" stroke-width="1.2"/>
<rect x="652.8" y="94.1" width="4.6" height="4.8" fill="none" stroke="#0f1a3c" stroke-width="1.2"/>
<rect x="645.9" y="102" width="4.6" height="4.8" fill="none" stroke="#0f1a3c" stroke-width="1.2"/>
<path d="M692.6 98.6 V94.3 H699.6 L702.6 97.3 V106 H692.6 V103.2" fill="none" stroke="#0f1a3c" stroke-width="1.2"/>
<path d="M699.3 94.3 V97.6 H702.6" fill="none" stroke="#0f1a3c" stroke-width="1"/>
<path d="M690 100.9 H696" stroke="#0f1a3c" stroke-width="1.3"/>
<polygon points="695.4,98.2 698.4,100.9 695.4,103.6" fill="#0f1a3c" />
<rect x="744.9" y="95" width="14.2" height="9.8" fill="#0f1a3c"/>
<path d="M745.6 95.8 L752 101 L758.4 95.8" fill="none" stroke="#c9cdd8" stroke-width="1.1"/>
<path d="M807.50 99.80 A4.55 4.55 0 0 1 815.64 97.00" fill="none" stroke="#0f1a3c" stroke-width="2.3"/>
<path d="M816.60 99.80 A4.55 4.55 0 0 1 808.46 102.60" fill="none" stroke="#0f1a3c" stroke-width="2.3"/>
<polygon points="818.00,93.85 818.00,98.55 813.30,98.55" fill="#0f1a3c" />
<polygon points="806.10,105.75 806.10,101.05 810.80,101.05" fill="#0f1a3c" />
<rect x="837.6" y="93.8" width="11.9" height="11.5" fill="none" stroke="#0f1a3c" stroke-width="1.2"/>
<rect x="839.6" y="95.4" width="8.6" height="1.2" fill="#555b74"/>
<rect x="839.6" y="97.4" width="1.4" height="6" fill="#8d91a2"/>
<circle cx="847.4" cy="103.3" r="4.1" fill="#c9cad0"/>
<path d="M844.80 103.30 A2.55 2.55 0 0 1 849.36 101.73" fill="none" stroke="#0f1a3c" stroke-width="1.5"/>
<path d="M849.90 103.30 A2.55 2.55 0 0 1 845.34 104.87" fill="none" stroke="#0f1a3c" stroke-width="1.5"/>
<polygon points="850.85,99.80 850.85,102.50 848.15,102.50" fill="#0f1a3c" />
<polygon points="843.85,106.80 843.85,104.10 846.55,104.10" fill="#0f1a3c" />
<path d="M904.68 100.41 A5.6 5.6 0 1 0 901.73 105.84" fill="none" stroke="#0f1a3c" stroke-width="1.3"/>
<circle cx="899.1" cy="93.7" r="1.05" fill="#0f1a3c"/>
<path d="M899.1 97.2 V100.9 H902.8" fill="none" stroke="#0f1a3c" stroke-width="1.4"/>
<polygon points="900.3,104.2 904.6,104.6 902.6,107.8" fill="#0f1a3c" />
<path d="M419.6 123.2 H423.4 V127.6 H424.8 V128.8 H418.2 V127.6 H419.6 Z" fill="#2a3354"/>
<path d="M421.5 128.8 V131.8" stroke="#2a3354" stroke-width="1"/>
<path d="M449.2 123.5 L456.8 130.9 M456.8 123.5 L449.2 130.9" stroke="#2a3354" stroke-width="1.3"/>
<path d="M72.2 311.8 L75.3 308.2 L78.4 311.8" fill="none" stroke="#3a3f52" stroke-width="1.3"/>
<path d="M72.2 489.6 L75.3 486.0 L78.4 489.6" fill="none" stroke="#3a3f52" stroke-width="1.3"/>
</svg>
<!-- clip below page -->
<div class="a" style="left:700px;top:1021px;width:1061px;height:17px;background:linear-gradient(to bottom,#ececec 0,#ececec 11px,#f7f7f7 17px)"></div>
</body>
</html>
